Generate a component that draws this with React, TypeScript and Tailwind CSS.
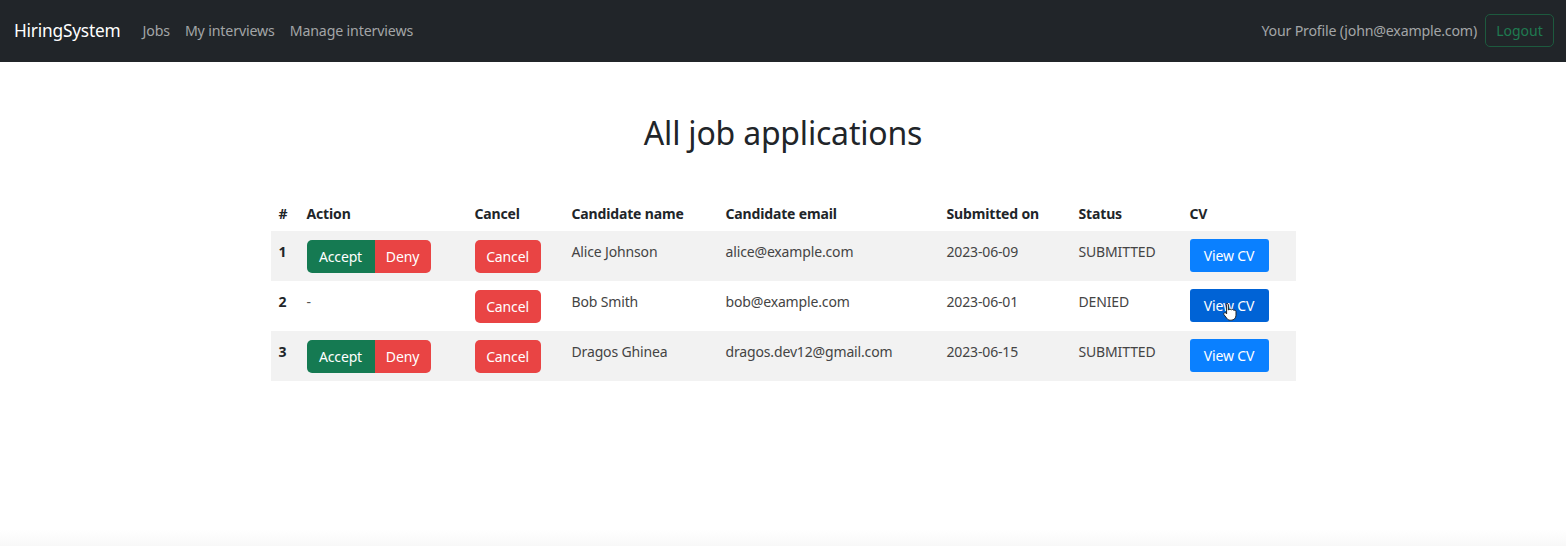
import React from "react";

const rows = [
  { n: 1, actions: true, name: "Alice Johnson", email: "alice@example.com", date: "2023-06-09", status: "SUBMITTED", hover: false },
  { n: 2, actions: false, name: "Bob Smith", email: "bob@example.com", date: "2023-06-01", status: "DENIED", hover: true },
  { n: 3, actions: true, name: "Dragos Ghinea", email: "dragos.dev12@gmail.com", date: "2023-06-15", status: "SUBMITTED", hover: false },
];

export default function App() {
  return (
    <div
      className="min-h-[546px] bg-white text-[#212529] flex flex-col"
      style={{ fontFamily: '"Noto Sans", "Open Sans", sans-serif' }}
    >
      <nav className="h-[62px] bg-[#212529] flex items-center justify-between pl-[14px] pr-[12px] pb-[1px]">
        <div className="flex items-center">
          <span className="text-[17.3px] text-white mr-[22px] tracking-[-0.2px]">HiringSystem</span>
          <div className="flex items-center gap-[15px] text-[14.2px] text-[#a3a5a7] tracking-[-0.15px]">
            <span>Jobs</span>
            <span>My interviews</span>
            <span>Manage interviews</span>
          </div>
        </div>
        <div className="flex items-center gap-[8px]">
          <span className="text-[14.2px] text-[#a3a5a7] tracking-[-0.2px]">Your Profile (john@example.com)</span>
          <button className="h-[33px] w-[69px] rounded-[5px] border border-[#1d5a3e] text-[14px] text-[#1f7a50]">
            Logout
          </button>
        </div>
      </nav>

      <h1 className="text-center text-[32px] leading-[40px] mt-[51px] tracking-[-0.2px]">All job applications</h1>

      <table className="mt-[42px] mx-auto w-[1025px] table-fixed border-collapse text-[14px] tracking-[-0.15px]">
        <colgroup>
          <col className="w-[28px]" />
          <col className="w-[168px]" />
          <col className="w-[97px]" />
          <col className="w-[154px]" />
          <col className="w-[221px]" />
          <col className="w-[132px]" />
          <col className="w-[111px]" />
          <col className="w-[114px]" />
        </colgroup>
        <thead>
          <tr className="h-[36px]">
            {["#", "Action", "Cancel", "Candidate name", "Candidate email", "Submitted on", "Status", "CV"].map((h) => (
              <th key={h} className="text-left font-bold px-[8px] align-middle">
                {h}
              </th>
            ))}
          </tr>
        </thead>
        <tbody>
          {rows.map((r, i) => (
            <tr key={r.n} className={`h-[50px] ${i % 2 === 0 ? "bg-[#f2f2f2]" : "bg-white"}`}>
              <td className="px-[8px] align-top pt-[10px] font-bold">{r.n}</td>
              <td className="px-[8px] align-top pt-[9px]">
                {r.actions ? (
                  <div className="flex">
                    <button className="h-[33px] w-[68px] bg-[#157a52] text-white rounded-l-[5px]">Accept</button>
                    <button className="h-[33px] w-[56px] bg-[#e94444] text-white rounded-r-[5px]">Deny</button>
                  </div>
                ) : (
                  <div className="pt-[1px] text-[#555]">-</div>
                )}
              </td>
              <td className="px-[8px] align-top pt-[9px]">
                <button className="h-[33px] w-[66px] bg-[#e94444] text-white rounded-[5px]">Cancel</button>
              </td>
              <td className="px-[8px] align-top pt-[10px] text-[#444]">{r.name}</td>
              <td className="px-[8px] align-top pt-[10px] text-[#444]">{r.email}</td>
              <td className="px-[8px] align-top pt-[10px] text-[#444]">{r.date}</td>
              <td className="px-[8px] align-top pt-[10px] text-[#444]">{r.status}</td>
              <td className="px-[8px] align-top pt-[8px]">
                <button
                  className={`relative h-[33px] w-[79px] rounded-[3px] text-white text-[14px] ${
                    r.hover ? "bg-[#0063d6]" : "bg-[#0a80ff]"
                  }`}
                >
                  View CV
                  {r.hover && (
                    <svg
                      className="absolute left-[33px] top-[13px]"
                      width="14"
                      height="19"
                      viewBox="0 0 14 19"
                    >
                      <path
                        d="M4 1.5c.8 0 1.4.6 1.4 1.4v5.2l.2-.1c.3-.5.8-.8 1.4-.8.6 0 1.1.3 1.3.8.3-.3.7-.5 1.2-.5.6 0 1.1.4 1.3.9.2-.1.5-.2.8-.2.8 0 1.4.6 1.4 1.4v3.6c0 2.8-2.1 5-4.8 5H7.3c-1.3 0-2.5-.6-3.3-1.6L1 12.7c-.4-.6-.3-1.4.3-1.8.6-.4 1.4-.3 1.8.3l.5.7V2.9C2.6 2.1 3.2 1.5 4 1.5z"
                        fill="#fff"
                        stroke="#222"
                        strokeWidth="1"
                      />
                    </svg>
                  )}
                </button>
              </td>
            </tr>
          ))}
        </tbody>
      </table>

      <div className="flex-1" />
      <div className="h-[16px] bg-gradient-to-b from-white to-[#f8f8f8]" />
    </div>
  );
}
